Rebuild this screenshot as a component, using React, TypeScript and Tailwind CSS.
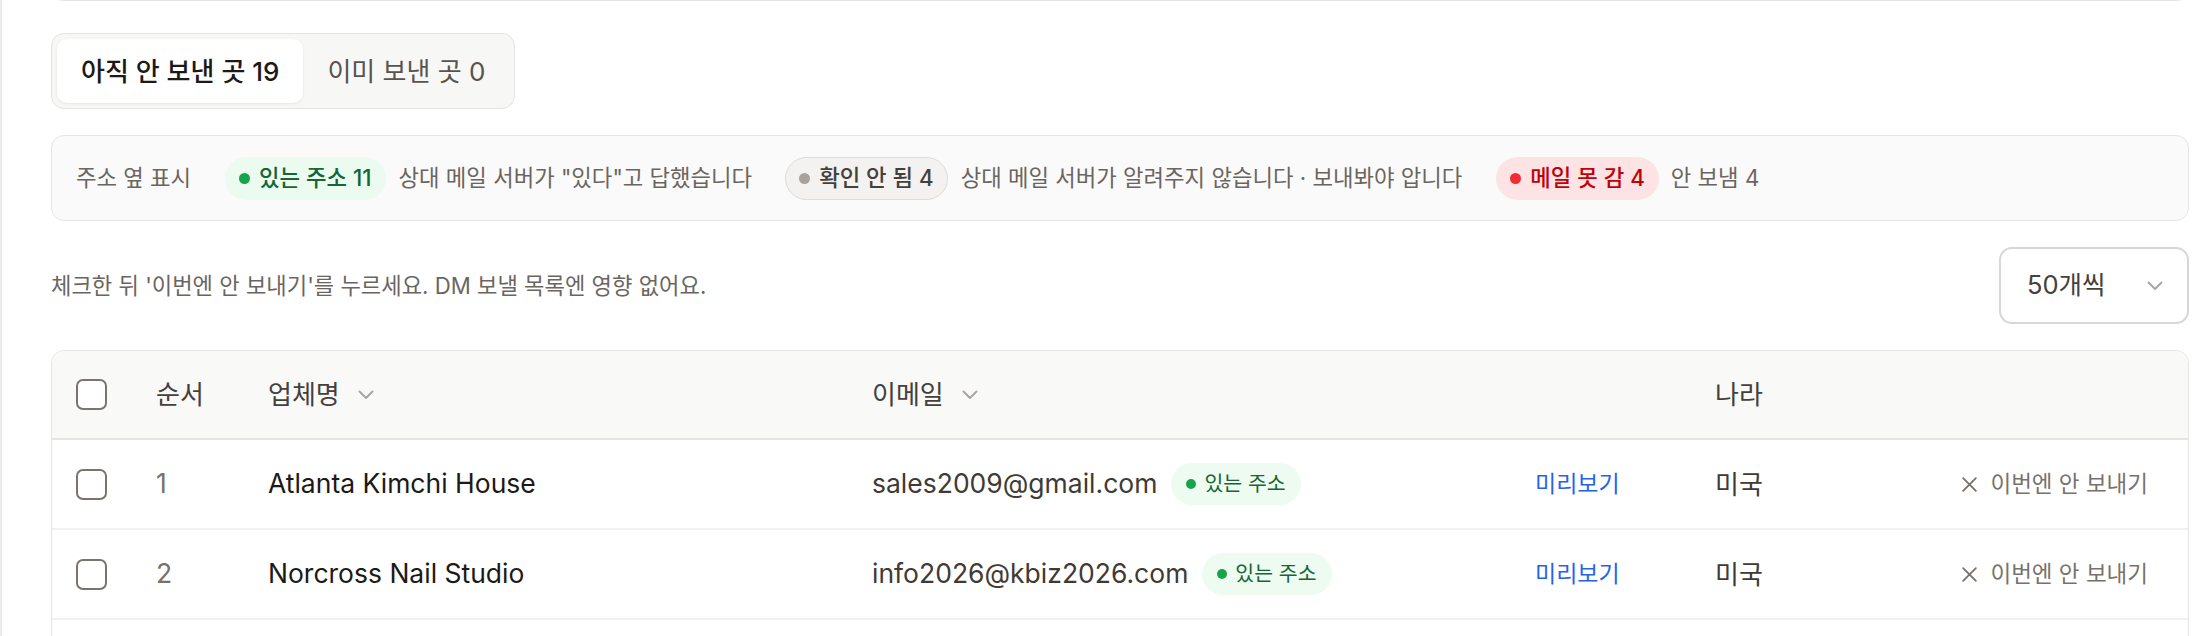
import React from "react";

function Chevron({ className }: { className?: string }) {
  return (
    <svg width="16" height="10" viewBox="0 0 16 10" fill="none" className={className}>
      <path d="M1.5 1.5 8 8l6.5-6.5" stroke="currentColor" strokeWidth="1.8" strokeLinecap="round" strokeLinejoin="round" />
    </svg>
  );
}

function XIcon() {
  return (
    <svg width="17" height="17" viewBox="0 0 16 16" fill="none">
      <path d="M2 2l12 12M14 2 2 14" stroke="currentColor" strokeWidth="1.7" strokeLinecap="round" />
    </svg>
  );
}

function Checkbox() {
  return <div className="h-[31px] w-[31px] rounded-[7px] border-2 border-[#7a746e] bg-white" />;
}

function RowBadge() {
  return (
    <span className="inline-flex h-[42px] items-center gap-[8px] rounded-full bg-[#edfbf1] px-[15px] text-[20.5px] text-[#166534]">
      <span className="h-[10px] w-[10px] rounded-full bg-[#16a34a]" />
      있는 주소
    </span>
  );
}

const rows = [
  { n: 1, name: "Atlanta Kimchi House", email: "sales2009@gmail.com" },
  { n: 2, name: "Norcross Nail Studio", email: "info2026@kbiz2026.com" },
];

export default function App() {
  return (
    <div className="h-screen overflow-hidden border-l-2 border-[#ebebeb] bg-white pl-[49px] pr-[21px] font-[Inter,'Noto_Sans_CJK_KR',sans-serif] text-[#1c1917]">
      {/* end of card above */}
      <div className="-mt-[11px] h-[12px] rounded-b-xl border border-t-0 border-[#e7e5e4]" />

      {/* tabs */}
      <div className="mt-[32px] inline-flex rounded-[13px] border border-[#e5e4e2] bg-[#f7f7f6] p-[5px]">
        <button className="flex h-[64px] items-center rounded-[10px] bg-white px-6 text-[26px] font-medium text-[#1c1917] shadow-[0_1px_3px_rgba(0,0,0,0.08)]">
          아직 안 보낸 곳 19
        </button>
        <button className="flex h-[64px] items-center rounded-[10px] px-6 text-[26px] text-[#57534e]">
          이미 보낸 곳 0
        </button>
      </div>

      {/* legend */}
      <div className="mt-[26px] flex h-[86px] items-center rounded-[13px] border border-[#e5e4e2] bg-[#fafafa] px-6 text-[22.3px] text-[#6b655f]">
        <span>주소 옆 표시</span>
        <div className="ml-[34px] flex items-center gap-[13px]">
          <span className="inline-flex h-[43px] items-center gap-[9px] rounded-full bg-[#ecfbf0] px-[14px] font-medium text-[#166534]">
            <span className="h-[11px] w-[11px] rounded-full bg-[#16a34a]" />
            있는 주소 11
          </span>
          <span>상대 메일 서버가 "있다"고 답했습니다</span>
        </div>
        <div className="ml-[33px] flex items-center gap-[13px]">
          <span className="inline-flex h-[43px] items-center gap-[9px] rounded-full border border-[#dedcd9] bg-[#f3f2f1] px-[13px] font-medium text-[#44403c]">
            <span className="h-[11px] w-[11px] rounded-full bg-[#a8a29e]" />
            확인 안 됨 4
          </span>
          <span>상대 메일 서버가 알려주지 않습니다 · 보내봐야 압니다</span>
        </div>
        <div className="ml-[34px] flex items-center gap-[12px]">
          <span className="inline-flex h-[43px] items-center gap-[9px] rounded-full bg-[#fde3e3] px-[14px] font-medium text-[#c10007]">
            <span className="h-[11px] w-[11px] rounded-full bg-[#ef2b36]" />
            메일 못 감 4
          </span>
          <span>안 보냄 4</span>
        </div>
      </div>

      {/* hint + page size */}
      <div className="mt-[26px] flex items-center justify-between">
        <p className="text-[22.2px] text-[#6b655f]">
          체크한 뒤 '이번엔 안 보내기'를 누르세요. DM 보낼 목록엔 영향 없어요.
        </p>
        <div className="flex h-[77px] w-[190px] items-center justify-between rounded-[13px] border-2 border-[#d9d6d3] bg-white pl-[26px] pr-[24px] text-[25.5px] text-[#44403c]">
          <span>50개씩</span>
          <Chevron className="text-[#a8a29e]" />
        </div>
      </div>

      {/* table */}
      <div className="mt-[26px] h-[400px] overflow-hidden rounded-t-[13px] border border-[#e7e5e4]">
        <div className="grid h-[89px] grid-cols-[80px_112px_604px_663px_180px_200px_1fr] items-center border-b-2 border-[#e7e5e4] bg-[#f9f9f8] pl-6 pr-10 text-[26px] text-[#44403c]">
          <Checkbox />
          <span>순서</span>
          <span className="flex items-center gap-[18px]">
            업체명
            <Chevron className="text-[#a8a29e]" />
          </span>
          <span className="flex items-center gap-[18px]">
            이메일
            <Chevron className="text-[#a8a29e]" />
          </span>
          <span />
          <span>나라</span>
          <span />
        </div>
        {rows.map((r) => (
          <div
            key={r.n}
            className="grid h-[90px] grid-cols-[80px_112px_604px_663px_180px_200px_1fr] items-center border-b-2 border-[#f2f1f0] pl-6 pr-10"
          >
            <Checkbox />
            <span className="text-[26.5px] text-[#78716c]">{r.n}</span>
            <span className="text-[26.5px] text-[#1c1917]">{r.name}</span>
            <span className="flex items-center gap-[14px]">
              <span className="text-[26.5px] text-[#3f3a36]">{r.email}</span>
              <RowBadge />
            </span>
            <span className="text-[23px] text-[#2563eb]">미리보기</span>
            <span className="text-[26px] text-[#3f3a36]">미국</span>
            <span className="flex items-center justify-end gap-[12px] text-[22.5px] text-[#78716c]">
              <XIcon />
              이번엔 안 보내기
            </span>
          </div>
        ))}
      </div>
    </div>
  );
}
